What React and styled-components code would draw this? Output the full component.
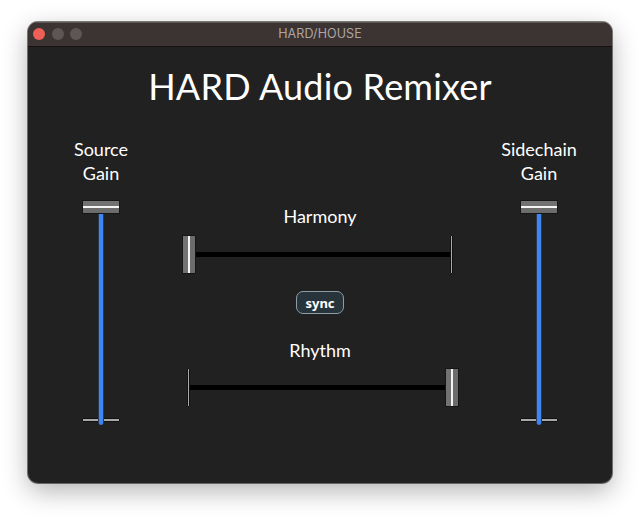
import React from "react";
import styled, { createGlobalStyle } from "styled-components";

const GlobalStyle = createGlobalStyle`
  body {
    margin: 0;
    background: #ffffff;
    font-family: "Lato", "Noto Sans", sans-serif;
  }
`;

const Page = styled.div`
  width: 640px;
  height: 517px;
  padding: 22px 0 0 28px;
  box-sizing: border-box;
`;

const Window = styled.div`
  width: 584px;
  height: 461px;
  border-radius: 10px;
  overflow: hidden;
  background: #212121;
  display: flex;
  flex-direction: column;
  box-shadow: 0 0 0 1px rgba(0, 0, 0, 0.5), 0 8px 26px rgba(0, 0, 0, 0.3);
`;

const TitleBar = styled.div`
  height: 24px;
  flex: none;
  display: grid;
  grid-template-columns: 1fr auto 1fr;
  align-items: center;
  background: #3c3432;
  border-bottom: 1px solid #141212;
  box-shadow: inset 0 1px 0 rgba(255, 255, 255, 0.18);
`;

const Lights = styled.div`
  display: flex;
  gap: 6.5px;
  padding-left: 5px;
`;

const Light = styled.span`
  width: 12px;
  height: 12px;
  border-radius: 50%;
  background: ${(p) => p.$color};
`;

const WindowTitle = styled.div`
  font-family: "Inter", "Liberation Sans", sans-serif;
  font-size: 12.5px;
  line-height: 14px;
  margin-top: -1px;
  color: #aca5a2;
  letter-spacing: 0.1px;
`;

const Body = styled.div`
  flex: 1;
  display: flex;
  flex-direction: column;
  align-items: stretch;
  padding-top: 15px;
  color: #ffffff;
`;

const Heading = styled.h1`
  margin: 0;
  font-size: 36px;
  font-weight: 400;
  line-height: 48px;
  text-align: center;
  letter-spacing: 0.2px;
`;

const Controls = styled.div`
  display: grid;
  grid-template-columns: 146px 1fr 146px;
  margin-top: 27px;
`;

const SideColumn = styled.div`
  display: flex;
  flex-direction: column;
  align-items: center;
`;

const CenterColumn = styled.div`
  display: flex;
  flex-direction: column;
  align-items: center;
  padding-top: 67px;
`;

const Label = styled.div`
  font-size: 18px;
  line-height: 24px;
  text-align: center;
  margin-top: ${(p) => p.$top || 0}px;
`;

const VSlider = styled.div`
  position: relative;
  width: 38px;
  height: 225px;
  margin-top: 15px;
  display: flex;
  flex-direction: column;
  align-items: center;
`;

const VThumb = styled.div`
  width: 38px;
  height: 14px;
  box-sizing: border-box;
  border: 1px solid #151515;
  border-radius: 1px;
  background: linear-gradient(
    to bottom,
    #727272 0 5px,
    #f4f4f4 5px 7px,
    #6c6c6c 7px
  );
  position: relative;
  z-index: 2;
`;

const VTrack = styled.div`
  flex: 1;
  width: 6px;
  box-sizing: border-box;
  background: #3d86f4;
  border-left: 1px solid #2a3a55;
  border-right: 1px solid #2a3a55;
  border-radius: 0 0 3px 3px;
  position: relative;
  z-index: 1;
`;

const VTick = styled.div`
  position: absolute;
  left: 0;
  right: 0;
  bottom: 3px;
  height: 4px;
  box-sizing: border-box;
  background: #a9a9a9;
  border: 1px solid #111;
  border-radius: 1px;
`;

const HSlider = styled.div`
  position: relative;
  width: 276px;
  height: 39px;
  margin-top: ${(p) => p.$top}px;
`;

const HTrack = styled.div`
  position: absolute;
  left: 6px;
  right: 6px;
  top: 17px;
  height: 5px;
  background: #000;
`;

const HTick = styled.div`
  position: absolute;
  top: 0;
  width: 3px;
  height: 39px;
  box-sizing: border-box;
  background: #a9a9a9;
  border: 1px solid #111;
  border-radius: 1px;
`;

const HThumb = styled.div`
  position: absolute;
  top: 0;
  width: 14px;
  height: 39px;
  box-sizing: border-box;
  border: 1px solid #151515;
  border-radius: 1px;
  background: linear-gradient(
    to right,
    #727272 0 5px,
    #f4f4f4 5px 7px,
    #6c6c6c 7px
  );
`;

const SyncButton = styled.button`
  margin-top: 17px;
  width: 48px;
  height: 23px;
  padding: 0;
  box-sizing: border-box;
  border: 1px solid #8d9ea7;
  border-radius: 7px;
  background: #27343b;
  color: #ffffff;
  font-family: "Noto Sans", "Lato", sans-serif;
  font-weight: 700;
  font-size: 13px;
  line-height: 20px;
`;

function VerticalSlider() {
  return (
    <VSlider>
      <VThumb />
      <VTrack />
      <VTick />
    </VSlider>
  );
}

function HorizontalSlider({ value, top }) {
  const range = 263;
  const thumbLeft = value * range;
  const tickLeft = (1 - value) * range + 5;
  return (
    <HSlider $top={top}>
      <HTrack />
      <HTick style={{ left: tickLeft }} />
      <HThumb style={{ left: thumbLeft }} />
    </HSlider>
  );
}

export default function App() {
  return (
    <Page>
      <GlobalStyle />
      <Window>
        <TitleBar>
          <Lights>
            <Light $color="#ee5f57" />
            <Light $color="#5d5654" />
            <Light $color="#5d5654" />
          </Lights>
          <WindowTitle>HARD/HOUSE</WindowTitle>
          <div />
        </TitleBar>
        <Body>
          <Heading>HARD Audio Remixer</Heading>
          <Controls>
            <SideColumn>
              <Label>
                Source
                <br />
                Gain
              </Label>
              <VerticalSlider />
            </SideColumn>
            <CenterColumn>
              <Label>Harmony</Label>
              <HorizontalSlider value={0} top={7} />
              <SyncButton>sync</SyncButton>
              <Label $top={24}>Rhythm</Label>
              <HorizontalSlider value={1} top={6} />
            </CenterColumn>
            <SideColumn>
              <Label>
                Sidechain
                <br />
                Gain
              </Label>
              <VerticalSlider />
            </SideColumn>
          </Controls>
        </Body>
      </Window>
    </Page>
  );
}
